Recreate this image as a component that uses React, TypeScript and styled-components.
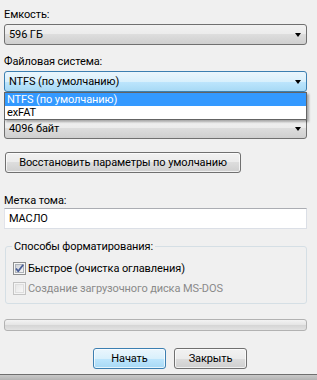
import React from "react";
import styled, { createGlobalStyle, css } from "styled-components";

const GlobalStyle = createGlobalStyle`
  html, body {
    margin: 0;
    padding: 0;
    background: #f0f0f0;
  }
`;

const Window = styled.div`
  width: 317px;
  height: 380px;
  background: #f0f0f0;
  font-family: Roboto, "Noto Sans", sans-serif;
  font-size: 11px;
  letter-spacing: -0.1px;
  color: #000;
  display: flex;
  flex-direction: column;
  overflow: hidden;
`;

const Body = styled.div`
  flex: 1;
  padding: 7px 10px 0 4px;
  display: flex;
  flex-direction: column;
`;

const Field = styled.div<{ $gap?: number }>`
  margin-bottom: ${(p) => (p.$gap ?? 9)}px;
`;

const Label = styled.div<{ $gap?: number }>`
  line-height: 15px;
  height: 15px;
  margin-bottom: ${(p) => (p.$gap ?? 2)}px;
  white-space: nowrap;
`;

const ComboWrap = styled.div`
  position: relative;
`;

const Combo = styled.div<{ $active?: boolean }>`
  height: 21px;
  box-sizing: border-box;
  border: 1px solid #707070;
  border-radius: 3px;
  padding: 0 0 0 4px;
  display: flex;
  align-items: center;
  justify-content: space-between;
  white-space: nowrap;
  background: linear-gradient(#f2f2f2 0%, #ebebeb 50%, #dddddd 50%, #cfcfcf 100%);
  ${(p) =>
    p.$active &&
    css`
      border-color: #3c7fb1;
      background: linear-gradient(#eaf6fd 0%, #d9f0fc 50%, #bee6fd 50%, #a7d9f5 100%);
    `}
`;

const Arrow = styled.span`
  width: 0;
  height: 0;
  border-left: 3.5px solid transparent;
  border-right: 3.5px solid transparent;
  border-top: 4px solid #000;
  margin-right: 5px;
`;

const DropList = styled.ul`
  position: absolute;
  top: 21px;
  left: 0;
  right: 0;
  z-index: 2;
  margin: 0;
  padding: 0;
  list-style: none;
  background: #fff;
  border: 1px solid #646464;
  box-shadow: 2px 2px 2px rgba(0, 0, 0, 0.3);
`;

const DropItem = styled.li<{ $selected?: boolean }>`
  height: 13px;
  line-height: 13px;
  padding-left: 2px;
  white-space: nowrap;
  ${(p) =>
    p.$selected &&
    css`
      background: #3399ff;
      color: #fff;
    `}
`;

const Button = styled.button<{ $default?: boolean; $width?: number }>`
  font: inherit;
  letter-spacing: inherit;
  color: #000;
  height: 21px;
  width: ${(p) => (p.$width ? `${p.$width}px` : "auto")};
  padding: 0;
  box-sizing: border-box;
  border: 1px solid #707070;
  border-radius: 3px;
  line-height: 17px;
  white-space: nowrap;
  background: linear-gradient(#f2f2f2 0%, #ebebeb 50%, #dddddd 50%, #cfcfcf 100%);
  box-shadow: inset 0 0 0 1px rgba(255, 255, 255, 0.7);
  ${(p) =>
    p.$default &&
    css`
      border-color: #3c7fb1;
      background: linear-gradient(#eaf6fd 0%, #d9f0fc 50%, #bee6fd 50%, #a7d9f5 100%);
    `}
`;

const RestoreRow = styled.div`
  margin-top: 13px;
  margin-left: 1px;
  margin-bottom: 20px;
  display: flex;
`;

const TextBox = styled.div`
  height: 21px;
  box-sizing: border-box;
  border: 1px solid #dbdfe6;
  border-top-color: #abadb3;
  border-left-color: #e2e3ea;
  background: #fff;
  padding-left: 4px;
  line-height: 19px;
`;

const Group = styled.fieldset`
  margin: 10px 0 0 1px;
  padding: 0 0 7px 6px;
  border: 1px solid #d5dfe5;
  border-radius: 3px;
  display: flex;
  flex-direction: column;
  gap: 5px;
`;

const Legend = styled.legend`
  padding: 0 2px;
  line-height: 15px;
`;

const CheckRow = styled.label<{ $disabled?: boolean }>`
  display: flex;
  align-items: center;
  gap: 2px;
  height: 15px;
  line-height: 15px;
  padding-left: 1px;
  color: ${(p) => (p.$disabled ? "#8a8a8a" : "#000")};
  &:first-of-type {
    margin-top: 7px;
  }
`;

const Progress = styled.div`
  margin-top: 15px;
  height: 12px;
  box-sizing: border-box;
  border: 1px solid #b2b2b2;
  border-radius: 3px;
  background: linear-gradient(#f3f3f3 0%, #e6e6e6 45%, #d6d6d6 55%, #e2e2e2 100%);
`;

const Actions = styled.div`
  margin-top: 17px;
  padding-left: 89px;
  display: flex;
  gap: 8px;
`;

const Footer = styled.div`
  height: 5px;
  margin-top: auto;
  border-top: 1px solid #6f6f6f;
  background: linear-gradient(#c9c9c9, #b4b4b4);
`;

const CheckBox = ({ checked, disabled }: { checked?: boolean; disabled?: boolean }) => {
  const id = disabled ? "cbd" : "cbn";
  return (
    <svg width="13" height="13" viewBox="0 0 13 13">
      <defs>
        <linearGradient id={id} x1="0" y1="0" x2="1" y2="1">
          <stop offset="0" stopColor={disabled ? "#e6e6e6" : "#cbcfd5"} />
          <stop offset="1" stopColor={disabled ? "#f8f8f8" : "#f7f7f7"} />
        </linearGradient>
      </defs>
      <rect x="0.5" y="0.5" width="12" height="12" fill={disabled ? "#f4f4f4" : "#f6f6f6"} stroke={disabled ? "#c4c4c4" : "#8e8f8f"} />
      <rect x="2.5" y="2.5" width="8" height="8" fill={`url(#${id})`} stroke={disabled ? "#dedede" : "#aeb3b9"} />
      {checked && (
        <path d="M3 6.5 L5.2 9.2 L10.2 2.8" fill="none" stroke="#4a5f97" strokeWidth="1.8" strokeLinejoin="round" />
      )}
    </svg>
  );
};

export default function App() {
  return (
    <Window>
      <GlobalStyle />
      <Body>
        <Field>
          <Label>Емкость:</Label>
          <Combo>
            596 ГБ
            <Arrow />
          </Combo>
        </Field>
        <Field>
          <Label>Файловая система:</Label>
          <ComboWrap>
            <Combo $active>
              NTFS (по умолчанию)
              <Arrow />
            </Combo>
            <DropList>
              <DropItem $selected>NTFS (по умолчанию)</DropItem>
              <DropItem>exFAT</DropItem>
            </DropList>
          </ComboWrap>
        </Field>
        <Field $gap={0}>
          {/* label of the allocation-size box is hidden by the open list */}
          <Label />
          <Combo>
            4096 байт
            <Arrow />
          </Combo>
        </Field>
        <RestoreRow>
          <Button $width={236}>Восстановить параметры по умолчанию</Button>
        </RestoreRow>
        <Label $gap={0}>Метка тома:</Label>
        <TextBox>МАСЛО</TextBox>
        <Group>
          <Legend>Способы форматирования:</Legend>
          <CheckRow>
            <CheckBox checked />
            Быстрое (очистка оглавления)
          </CheckRow>
          <CheckRow $disabled>
            <CheckBox disabled />
            Создание загрузочного диска MS-DOS
          </CheckRow>
        </Group>
        <Progress />
        <Actions>
          <Button $default $width={73}>Начать</Button>
          <Button $width={73}>Закрыть</Button>
        </Actions>
      </Body>
      <Footer />
    </Window>
  );
}
